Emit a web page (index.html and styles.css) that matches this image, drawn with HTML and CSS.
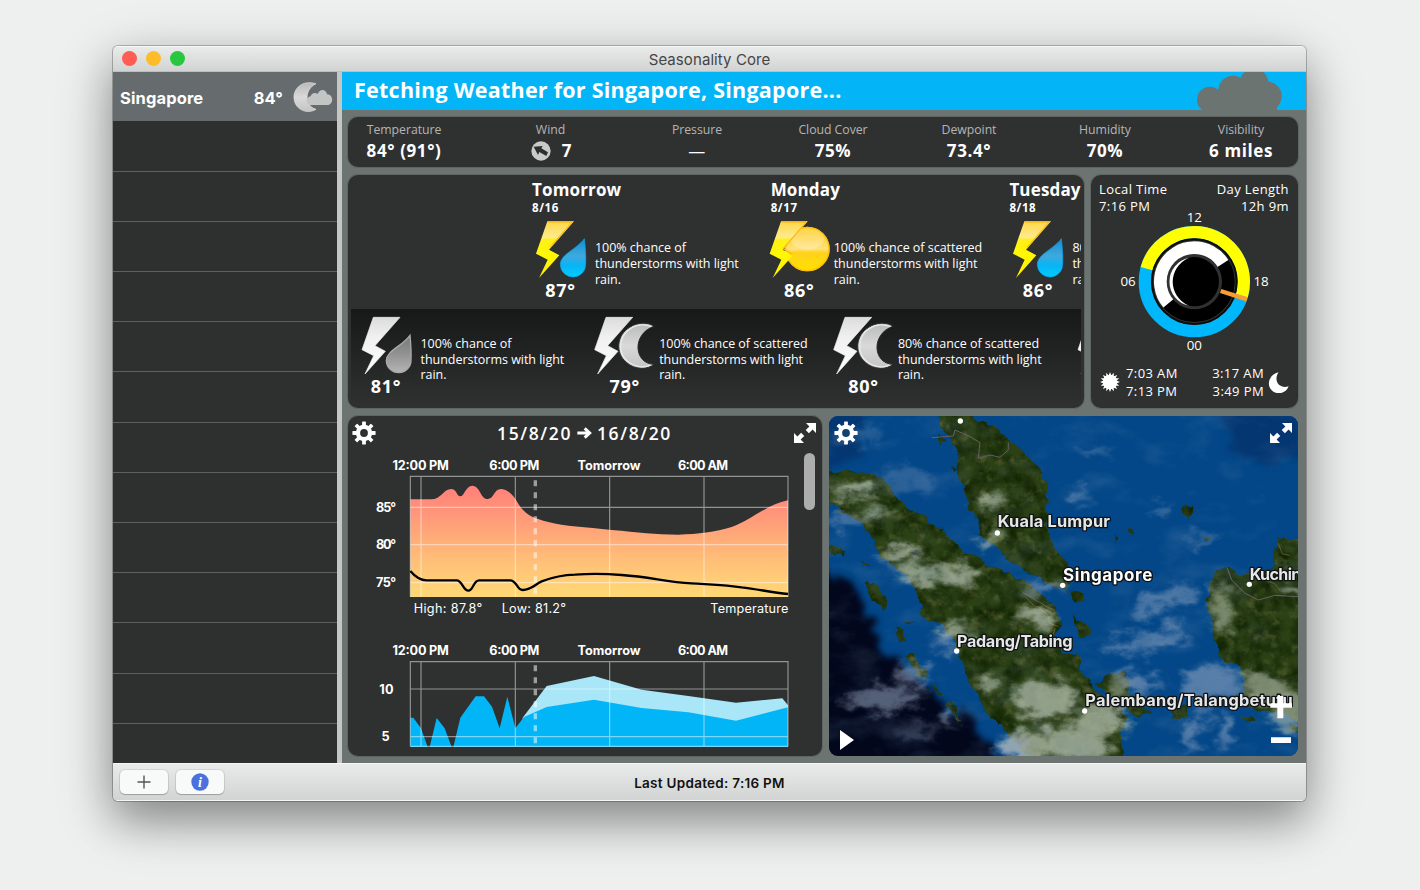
FILE: index.html
```
<!DOCTYPE html>
<html lang="en">
<head>
<meta charset="utf-8">
<title>Seasonality Core</title>
<link rel="stylesheet" href="styles.css">
</head>
<body>
<svg class="defs" width="0" height="0" aria-hidden="true">
  <defs>
    <linearGradient id="gBolt" x1="0" y1="0" x2="0" y2="1"><stop offset="0" stop-color="#ffd84a"/><stop offset=".28" stop-color="#fdea8c"/><stop offset=".32" stop-color="#fff01a"/><stop offset=".6" stop-color="#fff800"/><stop offset="1" stop-color="#fff000"/></linearGradient>
    <linearGradient id="gBoltN" x1="0" y1="0" x2="0" y2="1"><stop offset="0" stop-color="#dcdcdc"/><stop offset=".35" stop-color="#f0f0f0"/><stop offset="1" stop-color="#fff"/></linearGradient>
    <linearGradient id="gDrop" x1="0" y1="0" x2="0" y2="1"><stop offset="0" stop-color="#128ed4"/><stop offset=".45" stop-color="#3fa9dd"/><stop offset=".7" stop-color="#08b4f6"/><stop offset="1" stop-color="#00ccff"/></linearGradient>
    <linearGradient id="gDropN" x1="0" y1="0" x2="0" y2="1"><stop offset="0" stop-color="#777"/><stop offset=".5" stop-color="#929292"/><stop offset="1" stop-color="#b5b5b5"/></linearGradient>
    <linearGradient id="gSun" x1="0" y1="0" x2="0" y2="1"><stop offset="0" stop-color="#ffc400"/><stop offset=".5" stop-color="#ffe27c"/><stop offset=".58" stop-color="#ffd21c"/><stop offset="1" stop-color="#ffe100"/></linearGradient>
    <linearGradient id="gMoon" x1="0" y1="0" x2="0" y2="1"><stop offset="0" stop-color="#b9b9b9"/><stop offset=".5" stop-color="#d9d9d9"/><stop offset="1" stop-color="#c4c4c4"/></linearGradient>
    <linearGradient id="gHeat" x1="0" y1="0" x2="0" y2="1"><stop offset="0" stop-color="#ff7f79"/><stop offset=".3" stop-color="#ff9b7a"/><stop offset=".65" stop-color="#ffbd78"/><stop offset="1" stop-color="#ffd975"/></linearGradient>
    <symbol id="bolt" viewBox="0 0 195 186"><path d="M52 10H132L57 95 88 112 27 180 53 125 18 107Z" fill="url(#gBolt)"/><path d="M54 12H127L60 88" fill="none" stroke="#fbbd1c" stroke-width="4"/></symbol>
    <symbol id="boltN" viewBox="0 0 195 186"><path d="M52 10H132L57 95 88 112 27 180 53 125 18 107Z" fill="url(#gBoltN)" stroke="#f2f2f2" stroke-width="2"/></symbol>
    <symbol id="rainD" viewBox="0 0 195 186"><use href="#bolt"/><path d="M163 62C167 95 168 116 167 138A38 38 0 0 1 91 140C91 108 139 95 163 62Z" fill="url(#gDrop)" stroke="#0ba2ea" stroke-width="2"/></symbol>
    <symbol id="rainN" viewBox="0 0 195 186"><use href="#boltN"/><path d="M162 64C165 95 166 116 165 138A37 37 0 0 1 91 140C91 110 139 97 162 64Z" fill="url(#gDropN)" stroke="#a9a9a9" stroke-width="4"/></symbol>
    <symbol id="sunD" viewBox="0 0 195 186"><circle cx="115" cy="93" r="67" fill="url(#gSun)"/><circle cx="115" cy="93" r="65" fill="none" stroke="#ffbf0a" stroke-width="4"/><ellipse cx="115" cy="63" rx="50" ry="32" fill="#fff" opacity=".25"/><path d="M36 10H116L41 95 72 112 11 180 37 125 2 107Z" fill="url(#gBolt)"/><path d="M38 12H112L43 92 70 110" fill="none" stroke="#fbb91c" stroke-width="4"/></symbol>
    <symbol id="moonN" viewBox="0 0 195 186"><use href="#boltN" x="-16" width="195" height="186"/><path d="M180 37C165 24 129 24 107 40 68 62 62 118 98 146 122 168 163 167 180 151 120 150 112 60 180 37Z" fill="url(#gMoon)" stroke="#2a2c2c" stroke-width="3"/><path d="M172 38C155 30 129 30 110 43 74 66 70 116 101 142 122 160 153 163 169 153" fill="none" stroke="#e9e9e9" stroke-width="4"/></symbol>
    <symbol id="gear" viewBox="0 0 24 24"><g fill="#fff"><g id="teeth"><rect x="10.1" y=".4" width="3.8" height="23.2" rx=".6"/><rect x=".4" y="10.1" width="23.2" height="3.8" rx=".6"/></g><use href="#teeth" transform="rotate(45 12 12)"/></g><circle cx="12" cy="12" r="6" fill="none" stroke="#fff" stroke-width="4.4"/><circle cx="12" cy="12" r="3.9" class="gear-hole"/></symbol>
    <symbol id="expand" viewBox="0 0 24 24"><path d="M13 2H23V12L19.6 8.6 15.9 12.3 12.7 9.1 16.4 5.4ZM11 22H1V12L4.4 15.4 8.1 11.7 11.3 14.9 7.6 18.6Z" fill="#fff"/></symbol>
  </defs>
</svg>

<div class="window">
  <header class="titlebar">
    <div class="lights"><i class="red"></i><i class="amber"></i><i class="green"></i></div>
    <span>Seasonality Core</span>
  </header>

  <div class="body">
    <aside class="sidebar">
      <div class="place">
        <b>Singapore</b><b class="deg">84°</b>
        <svg width="40" height="30" viewBox="0 0 120 90"><path d="M69 5C25-8 0 23 3 49 6 86 46 97 69 82 34 72 33 22 69 5Z" fill="url(#gMoon)" stroke="#e5e5e5" stroke-width="2"/><path d="M52 69C36 67 38 45 53 43 56 33 67 31 74 36 80 18 100 21 102 37 123 38 122 68 103 69Z" fill="#c3c5c5"/></svg>
      </div>
      <ul><li></li><li></li><li></li><li></li><li></li><li></li><li></li><li></li><li></li><li></li><li></li><li></li><li></li></ul>
    </aside>

    <main class="main">
      <div class="banner">
        <h1>Fetching Weather for Singapore, Singapore...</h1>
        <svg class="banner-cloud" width="86" height="38" viewBox="0 3 258 114"><g fill="#6c7472"><circle cx="39" cy="86" r="39"/><circle cx="108" cy="58" r="44"/><circle cx="171" cy="36" r="43"/><circle cx="209" cy="76" r="45"/><path d="M15 117H240V60H39Z"/></g></svg>
      </div>

      <div class="panels">
        <section class="card metrics">
          <div><span>Temperature</span><b>84° (91°)</b></div>
          <div><span>Wind</span><b class="wind"><svg width="20" height="20" viewBox="0 0 60 60"><circle cx="30" cy="30" r="29" fill="#c9c9c9"/><path d="M8 17 35 15 31 22 51 34 46 45 25 33 21 42Z" fill="#2d2f2f"/></svg>7</b></div>
          <div><span>Pressure</span><b class="dash">—</b></div>
          <div><span>Cloud Cover</span><b>75%</b></div>
          <div><span>Dewpoint</span><b>73.4°</b></div>
          <div><span>Humidity</span><b>70%</b></div>
          <div><span>Visibility</span><b>6 miles</b></div>
        </section>

        <div class="row top">
          <section class="card forecast">
            <div class="strip days">
              <article><h2>Tomorrow</h2><h3>8/16</h3><div class="wx"><svg width="65" height="62"><use href="#rainD"/></svg><p>100% chance of<br>thunderstorms with light<br>rain.</p></div><b class="temp">87°</b></article>
              <article><h2>Monday</h2><h3>8/17</h3><div class="wx"><svg width="65" height="62"><use href="#sunD"/></svg><p>100% chance of scattered<br>thunderstorms with light<br>rain.</p></div><b class="temp">86°</b></article>
              <article><h2>Tuesday</h2><h3>8/18</h3><div class="wx"><svg width="65" height="62"><use href="#rainD"/></svg><p>80% chance of<br>thunderstorms with light<br>rain.</p></div><b class="temp">86°</b></article>
            </div>
            <div class="strip nights">
              <article><div class="wx"><svg width="65" height="62"><use href="#rainN"/></svg><p>100% chance of<br>thunderstorms with light<br>rain.</p></div><b class="temp">81°</b></article>
              <article><div class="wx"><svg width="65" height="62"><use href="#moonN"/></svg><p>100% chance of scattered<br>thunderstorms with light<br>rain.</p></div><b class="temp">79°</b></article>
              <article><div class="wx"><svg width="65" height="62"><use href="#moonN"/></svg><p>80% chance of scattered<br>thunderstorms with light<br>rain.</p></div><b class="temp">80°</b></article>
              <article><div class="wx"><svg width="65" height="62"><use href="#rainN"/></svg></div></article>
            </div>
          </section>

          <section class="card clock">
            <div class="pair head"><div>Local Time<br>7:16 PM</div><div class="r">Day Length<br>12h 9m</div></div>
            <svg class="dial" width="207" height="150" viewBox="18 120 621 450">
              <g fill="none">
                <circle cx="328" cy="335" r="148.5" stroke="#00b7fb" stroke-width="37"/>
                <path d="M184.700 296.080A148.500 148.500 0 0 1 328 186.500A148.500 148.500 0 0 1 470.440 377" stroke="#ffff02" stroke-width="37"/>
                <circle cx="328" cy="335" r="127" stroke="#0c0d0d" stroke-width="6"/>
                <circle cx="328" cy="335" r="101" stroke="#000" stroke-width="40"/>
                <path d="M250.600 400A101 101 0 0 1 328 234A101 101 0 0 1 413.200 280.700" stroke="#fff" stroke-width="40"/>
              </g>
              <circle cx="328" cy="335" r="83" fill="#303232"/><circle cx="328" cy="335" r="74" fill="#000"/>
              <path d="M312 263A73.500 73.500 0 0 0 312 407C247 378 247 292 312 263Z" fill="#fff"/>
              <path d="M407 363 486 388" stroke="#fc9a34" stroke-width="13"/>
              <g class="dial-text"><text x="328" y="157">12</text><text x="129" y="349">06</text><text x="528" y="349">18</text><text x="328" y="541">00</text></g>
            </svg>
            <div class="pair foot">
              <svg width="20" height="20" viewBox="0 0 60 60"><g fill="#fff"><circle cx="30" cy="30" r="21.500"/><g id="r3"><g id="r2"><g id="r1"><path d="M30 0 35 13H25ZM30 60 35 47H25Z"/></g><use href="#r1" transform="rotate(22.500 30 30)"/></g><use href="#r2" transform="rotate(45 30 30)"/></g><use href="#r3" transform="rotate(90 30 30)"/></g></svg>
              <div class="rise">7:03 AM<br>7:13 PM</div><div class="r set">3:17 AM<br>3:49 PM</div>
              <svg width="21" height="21" viewBox="0 0 62 62"><path d="M31 1C-1 9-6 44 16 58 34 69 54 60 61 42 36 51 14 28 31 1Z" fill="#fff"/></svg>
            </div>
          </section>
        </div>

        <div class="row bottom">
          <section class="card graphs">
            <div class="graph-head"><svg width="24" height="24"><use href="#gear"/></svg><h2>15/8/20 <svg width="15" height="14" viewBox="0 0 45 42"><path d="M1 21H34M23 7 38 21 23 35" fill="none" stroke="#fff" stroke-width="9"/></svg> 16/8/20</h2><svg width="24" height="24"><use href="#expand"/></svg></div>
            <div class="graph-body">
              <div class="plots">
                <svg width="444" height="162" viewBox="15 140 1332 486">
                  <g class="tick-x"><text x="227" y="178" textLength="169">12:00 PM</text><text x="508" y="178" textLength="150">6:00 PM</text><text x="792" y="178" textLength="189">Tomorrow</text><text x="1074" y="178" textLength="150">6:00 AM</text></g>
                  <g class="tick-y"><text x="153" y="304" textLength="60">85°</text><text x="153" y="417" textLength="60">80°</text><text x="153" y="530" textLength="60">75°</text></g>
                  <path d="M196 267H258C290 267 295 235 320 236 336 237 334 258 346 258 358 258 362 226 382 226 406 227 406 266 428 266 448 266 446 234 470 236 490 238 505 255 520 280 540 313 560 322 610 335 660 348 720 350 800 359 880 366 930 373 1000 373 1060 371 1110 366 1160 350 1220 329 1260 285 1329 270V560H196Z" fill="url(#gHeat)"/>
                  <path class="grid" d="M196 560V198H1329V560M228 198V560M511 198V560M794 198V560M1077 198V560M196 291H1329M196 403H1329M196 517H1329"/>
                  <path class="now" d="M571 210V552"/>
                  <path d="M196 482C206 494 220 510 245 510H335C352 510 354 541 370 541 385 541 385 510 402 510H495C516 510 516 540 533 539 560 538 570 522 590 513 625 500 650 494 690 493 730 490 780 490 830 494 920 500 960 515 1040 519 1120 524 1150 525 1190 531 1240 537 1280 546 1329 551" fill="none" stroke="#000" stroke-width="7"/>
                  <g class="legend"><text x="206" y="609" textLength="206">High: 87.8°</text><text x="470" y="609" textLength="193">Low: 81.2°</text><text x="1330" y="609" textLength="234" text-anchor="end">Temperature</text></g>
                </svg>
                <svg width="444" height="106" viewBox="15 122 1332 318">
                  <g class="tick-x"><text x="227" y="164" textLength="169">12:00 PM</text><text x="508" y="164" textLength="150">6:00 PM</text><text x="792" y="164" textLength="189">Tomorrow</text><text x="1074" y="164" textLength="150">6:00 AM</text></g>
                  <g class="tick-y"><text x="146" y="281" textLength="43">10</text><text x="134" y="423">5</text></g>
                  <path d="M533 352 605 257 747 227 890 268 1030 287 1173 307 1312 294 1329 315V440H533Z" fill="#a8e6f8"/>
                  <path d="M196 352H205L228 384 248 440H254L275 353 299 384 320 440H325L346 352 392 288H417L441 319 464 384 487 289 511 384 537 350 605 320 747 298 890 323 1030 336 1173 361 1329 321V440H196Z" fill="#02b5f7"/>
                  <path class="grid" d="M196 438V184H1329V438M228 184V438M511 184V438M794 184V438M1077 184V438M196 266H1329M196 409H1329M196 438H1329"/>
                  <path class="now" d="M571 195V432"/>
                </svg>
              </div>
              <div class="scroll"><i></i></div>
            </div>
          </section>

          <section class="map">
            <svg class="map-art" width="469" height="340" viewBox="12 18 1407 1020">
              <defs>
                <filter id="coast" x="-5%" y="-5%" width="110%" height="110%" color-interpolation-filters="sRGB"><feTurbulence type="fractalNoise" baseFrequency=".03" numOctaves="4" seed="4" result="n"/><feDisplacementMap in="SourceGraphic" in2="n" scale="26" xChannelSelector="R" yChannelSelector="G" result="d"/><feTurbulence type="fractalNoise" baseFrequency=".022" numOctaves="5" seed="9"/><feColorMatrix values="0 0 0 0 .06  0 0 0 0 .13  0 0 0 0 .01  2 0 0 0 -.7" result="t"/><feComposite in="t" in2="d" operator="in" result="tx"/><feTurbulence type="fractalNoise" baseFrequency=".03" numOctaves="5" seed="31"/><feColorMatrix values="0 0 0 0 .4  0 0 0 0 .42  0 0 0 0 .22  0 1.8 0 0 -.98" result="l"/><feComposite in="l" in2="d" operator="in" result="lx"/><feMerge><feMergeNode in="d"/><feMergeNode in="tx"/><feMergeNode in="lx"/></feMerge></filter>
                <filter id="deep" x="-20%" y="-20%" width="140%" height="140%" color-interpolation-filters="sRGB"><feTurbulence type="fractalNoise" baseFrequency=".02" numOctaves="4" seed="2" result="n"/><feDisplacementMap in="SourceGraphic" in2="n" scale="90" xChannelSelector="R" yChannelSelector="G"/><feGaussianBlur stdDeviation="9"/></filter>
                <filter id="cloud" x="-20%" y="-20%" width="140%" height="140%" color-interpolation-filters="sRGB"><feTurbulence type="fractalNoise" baseFrequency=".014 .022" numOctaves="4" seed="7" result="n"/><feGaussianBlur in="SourceGraphic" stdDeviation="13" result="b"/><feDisplacementMap in="b" in2="n" scale="95" xChannelSelector="R" yChannelSelector="G"/></filter>
                <filter id="haze" x="0" y="0" width="100%" height="100%" color-interpolation-filters="sRGB"><feTurbulence type="fractalNoise" baseFrequency=".006 .011" numOctaves="5" seed="21"/><feColorMatrix values="0 0 0 0 .5  0 0 0 0 .62  0 0 0 0 .75  0 2.2 0 0 -1.1"/></filter>
              </defs>
              <rect x="12" y="18" width="1407" height="1020" fill="#034788"/>
              <path filter="url(#deep)" d="M-60 460 50 500 120 570 150 680 250 780 330 860 430 930 500 1000 540 1100H-60Z" fill="#02071c"/>
              <g filter="url(#deep)" fill="#05336c" opacity=".8"><path d="M1190 0H1440V130L1330 170 1230 130Z"/><path d="M0 0H130L100 130 30 190H0Z"/></g>
              <g filter="url(#coast)" fill="#2b4015">
                <path d="M330 0 345 50 380 85 400 120 395 170 402 215 425 260 430 300 462 340 465 380 500 400 540 440 590 475 640 500 690 530 718 542 735 515 725 460 690 415 668 370 662 300 670 240 650 180 610 140 570 105 540 80 500 45 460 35 425 0Z"/>
                <path d="M0 180 60 185 150 190 185 215 215 265 270 310 340 350 385 390 415 435 445 432 480 465 530 485 590 510 640 550 690 585 705 640 685 690 710 725 760 738 770 790 815 845 870 880 905 920 890 960 895 1050H630L570 1000 540 960 490 910 450 850 430 800 400 730 385 690 340 640 295 620 280 560 260 510 220 480 165 440 150 395 110 340 60 310 0 275Z"/>
                <path d="M1430 388 1357 390 1347 440 1345 480 1285 490 1240 495 1210 470 1180 480 1155 520 1145 560 1160 620 1165 680 1185 750 1215 765 1245 760 1252 800 1258 880 1305 910 1360 900 1430 940Z"/>
                <path d="M815 825 855 785 900 790 915 840 975 910 925 915 895 880ZM1035 882 1092 888 1085 922 1042 930Z"/>
                <path d="M115 520 145 515 185 560 178 600 145 570ZM215 650 235 660 242 690 222 698ZM245 735 270 730 305 805 270 795ZM325 825 350 855 330 850ZM362 870 385 880 412 940 395 930ZM0 400 55 428 55 442 0 420ZM110 450 135 465 125 470ZM238 632 268 636 240 640ZM1068 295 1090 280 1106 305 1088 330ZM908 350 925 355 920 378ZM866 378 880 385 870 398ZM1138 378 1152 390 1142 398ZM735 545 780 550 778 575 745 570ZM745 610 800 670 765 680ZM340 75 360 95 345 105ZM1250 910 1290 930 1270 940ZM382 165 398 180 388 186ZM1395 945 1430 950 1410 965Z"/>
              </g>
              <path d="M240 395 258 405 285 440 270 438 255 425 275 428 264 415Z" fill="#080b18"/>
              <g fill="none" stroke="#675c65" stroke-width="3"><path d="M320 83 385 78 390 60 435 80 465 98 460 145 495 135 525 142 550 120 550 98M1206 472 1220 510 1260 550 1300 570 1350 556 1419 560"/></g>
              <g fill="none" stroke="#87723a" stroke-width="3" opacity=".6"><path d="M590 545 630 570 650 580 668 592 690 600M640 590 668 615 676 640 700 650M600 560 630 590 650 592 680 610M690 655 680 690M1360 400 1372 432 1395 436M1325 512 1350 522 1365 540"/></g>
              <g filter="url(#cloud)" fill="#b5c1b0" opacity=".75">
                <ellipse cx="90" cy="240" rx="70" ry="28"/><ellipse cx="150" cy="310" rx="45" ry="18"/><ellipse cx="225" cy="425" rx="65" ry="24"/><ellipse cx="280" cy="488" rx="60" ry="25"/><ellipse cx="400" cy="490" rx="65" ry="30"/><ellipse cx="490" cy="275" rx="38" ry="24"/><ellipse cx="500" cy="385" rx="35" ry="16"/><ellipse cx="625" cy="625" rx="52" ry="30"/><ellipse cx="390" cy="665" rx="50" ry="25"/><ellipse cx="660" cy="870" rx="100" ry="58"/><ellipse cx="620" cy="1010" rx="75" ry="55"/><ellipse cx="760" cy="1000" rx="90" ry="55"/><ellipse cx="835" cy="930" rx="85" ry="45"/><ellipse cx="1190" cy="600" rx="35" ry="70" opacity=".75"/><ellipse cx="1320" cy="840" rx="75" ry="50" opacity=".8"/><ellipse cx="1390" cy="900" rx="70" ry="55" opacity=".8"/><ellipse cx="1405" cy="550" rx="40" ry="15"/><ellipse cx="880" cy="840" rx="40" ry="28" opacity=".6"/><ellipse cx="490" cy="820" rx="40" ry="20"/>
              </g>
              <g filter="url(#cloud)" fill="#9babc4" opacity=".55">
                <ellipse cx="175" cy="865" rx="115" ry="34"/><ellipse cx="260" cy="795" rx="55" ry="28"/><ellipse cx="280" cy="960" rx="65" ry="15" opacity=".6"/><ellipse cx="370" cy="920" rx="30" ry="20"/><ellipse cx="660" cy="530" rx="60" ry="20"/><ellipse cx="360" cy="700" rx="38" ry="24"/><ellipse cx="560" cy="1010" rx="30" ry="50"/><ellipse cx="1020" cy="570" rx="110" ry="22" transform="rotate(-25 1020 570)"/><ellipse cx="910" cy="705" rx="90" ry="18"/><ellipse cx="1020" cy="680" rx="75" ry="24" transform="rotate(-20 1020 680)"/><ellipse cx="1160" cy="810" rx="85" ry="50"/><ellipse cx="940" cy="820" rx="60" ry="40"/><ellipse cx="1110" cy="960" rx="25" ry="70" transform="rotate(20 1110 960)"/><ellipse cx="1195" cy="965" rx="20" ry="60"/><ellipse cx="760" cy="250" rx="38" ry="15"/><ellipse cx="1000" cy="295" rx="25" ry="12"/><ellipse cx="1125" cy="385" rx="30" ry="10"/><ellipse cx="810" cy="125" rx="50" ry="9"/><ellipse cx="100" cy="70" rx="70" ry="22" opacity=".45"/><ellipse cx="240" cy="210" rx="90" ry="38" opacity=".5"/><ellipse cx="70" cy="325" rx="45" ry="15"/>
              </g>
              <rect x="12" y="18" width="1407" height="1020" filter="url(#haze)" opacity=".22"/>
              <g fill="#fff"><circle cx="406" cy="33" r="8"/><circle cx="517" cy="369" r="8"/><circle cx="713" cy="526" r="8"/><circle cx="395" cy="723" r="8"/><circle cx="1273" cy="523" r="8"/><circle cx="779" cy="903" r="8"/></g>
              <g class="cities"><text x="518" y="351" textLength="337">Kuala Lumpur</text><text x="714" y="513" textLength="268" class="major">Singapore</text><text x="396" y="711" textLength="347">Padang/Tabing</text><text x="1274" y="510" textLength="184">Kuching</text><text x="781" y="887" textLength="622">Palembang/Talangbetutu</text></g>
            </svg>
            <div class="map-tools">
              <div class="tool-row"><svg width="24" height="24" class="on-sea"><use href="#gear"/></svg><svg width="24" height="24"><use href="#expand"/></svg></div>
              <div class="tool-row end"><svg width="14" height="20" viewBox="0 0 14 20"><path d="M0 0 14 10 0 20Z" fill="#fff"/></svg><svg width="24" height="52" viewBox="0 0 72 156"><path d="M25 6H43V28H69V41H43V73H25V41H4V28H25ZM6 130H66V147H6Z" fill="#fff"/></svg></div>
            </div>
          </section>
        </div>
      </div>
    </main>
  </div>

  <footer class="footer">
    <div class="buttons">
      <button><svg width="14" height="14" viewBox="0 0 14 14"><path d="M7 .5V13.500M.5 7H13.500" stroke="#555" stroke-width="1.400"/></svg></button>
      <button><svg width="18" height="18" viewBox="0 0 18 18"><circle cx="9" cy="9" r="8.700" fill="#4d70df"/><text x="9" y="14" class="info">i</text></svg></button>
    </div>
    <b>Last Updated: 7:16 PM</b>
  </footer>
</div>
</body>
</html>
```
FILE: styles.css
```
* { box-sizing: border-box; }
body { margin: 0; height: 890px; overflow: hidden; background: #eef0ef; color: #fff; font-family: "Open Sans", "Noto Sans", sans-serif; padding: 46px 0 0 113px; }
h1, h2, h3, p, ul { margin: 0; padding: 0; list-style: none; }
svg { display: block; flex: none; }
.defs { position: absolute; }

.window { width: 1193px; height: 755px; display: flex; flex-direction: column; border-radius: 5px; overflow: hidden; background: #d9dbda; box-shadow: 0 0 0 1px rgba(0,0,0,.24), 0 20px 40px rgba(0,0,0,.28), 0 16px 60px rgba(0,0,0,.24); }
.titlebar { height: 26px; display: grid; grid-template-columns: 1fr auto 1fr; align-items: center; background: linear-gradient(#e9ebea, #d2d4d3); border-top: 1px solid #f7f8f8; border-bottom: 1px solid #bfbfbf; font: 15px Inter, sans-serif; color: #454545; }
.titlebar span { letter-spacing: .08px; }
.lights { display: flex; gap: 9px; padding-left: 9px; }
.lights i { width: 15px; height: 15px; border-radius: 50%; margin-top: -1px; }
.red { background: #ff5c54; }
.amber { background: #fdbd2b; }
.green { background: #27c840; }

.body { flex: 1; display: flex; min-height: 0; }
.sidebar { width: 229px; background: #2e3030; border-right: 5px solid #c5c7c6; overflow: hidden; }
.place { height: 49px; background: #666b6d; display: flex; align-items: center; padding: 2px 4px 0 7px; font: 16.500px Inter, sans-serif; }
.place b { font-weight: 700; letter-spacing: .12px; }
.place .deg { margin-left: auto; margin-right: 10px; }
.place svg { margin-top: -2px; }
.sidebar ul { padding-top: .5px; }
.sidebar li { height: 50.200px; border-bottom: 1px solid #5c6061; }
.sidebar li:last-child { border: 0; }

.main { flex: 1; background: #6c7472; display: flex; flex-direction: column; }
.banner { height: 38px; background: #03b5f6; display: flex; justify-content: space-between; padding: 0 23px 0 12px; }
.banner h1 { font-size: 21.500px; line-height: 36px; font-weight: 700; white-space: nowrap; letter-spacing: .25px; }
.panels { padding: 7px 8px 7px 6px; display: flex; flex-direction: column; gap: 8px; flex: 1; }
.card { background: #2f3131; border-radius: 10px; box-shadow: 0 0 0 1px rgba(50,55,55,.25); }

.metrics { height: 50px; display: grid; grid-template-columns: 112px 181px 112px 160px 112px 160px 112px; text-align: center; padding-top: 3px; }
.metrics span { display: block; font-size: 12.300px; line-height: 19px; letter-spacing: -.05px; color: #b3b5b5; }
.metrics b { display: flex; justify-content: center; align-items: center; font-size: 17px; line-height: 23px; gap: 11px; letter-spacing: .6px; }
.metrics .wind { padding-left: 2px; }
.metrics .dash { font-weight: 400; }

.row { display: flex; gap: 7px; }
.top { height: 233px; }
.bottom { height: 340px; }
.forecast { width: 736px; padding: 3px; overflow: hidden; }
.strip { display: flex; overflow: hidden; width: 730px; }
.strip article { width: 238.700px; flex: none; }
.days { height: 131px; padding-left: 179px; }
.days h2 { font-size: 17px; line-height: 23px; letter-spacing: .15px; padding-left: 2px; }
.days h3 { font-size: 11.500px; line-height: 13px; letter-spacing: .6px; padding-left: 2px; }
.nights { height: 96px; padding: 3px 0 0 4.500px; background: linear-gradient(#171919, #2f3131); }
.wx { display: flex; align-items: center; height: 66px; }
.wx p { font-size: 12.500px; line-height: 15.700px; white-space: nowrap; padding-top: 29px; letter-spacing: -.03px; }
.days .wx { height: 68px; }
.days .wx svg { margin-top: 2px; }
.days .wx p { padding-top: 32px; }
.temp { display: block; width: 61px; text-align: center; font-size: 18px; line-height: 18px; margin-top: -1px; letter-spacing: .7px; }
.days .temp { margin-top: -1px; }

.clock { width: 207px; display: flex; flex-direction: column; padding-top: 6px; }
.pair { display: flex; justify-content: space-between; font-size: 13px; line-height: 17px; letter-spacing: .4px; }
.pair .r { text-align: right; }
.head { padding: 0 9px 0 8px; }
.dial { margin-top: -5px; margin-bottom: 4px; }
.dial-text { fill: #fff; font-size: 40px; text-anchor: middle; }
.foot { padding: 0 9px; line-height: 18px; align-items: center; }
.rise { margin-right: auto; padding-left: 6px; }
.set { padding-right: 4px; }

.graphs { width: 474px; overflow: hidden; }
.graph-head { display: flex; justify-content: space-between; align-items: center; height: 37px; padding: 0 5px 3px 4px; }
.graph-head h2 { display: flex; align-items: center; gap: 5px; font-size: 17.500px; font-weight: 600; letter-spacing: 1.600px; }
.gear-hole { fill: var(--hole, #2f3131); }
.on-sea { --hole: #12406f; }
.graph-body { display: flex; gap: 10px; padding-left: 2px; }
.plots { display: flex; flex-direction: column; gap: 22px; padding-top: 4px; width: 444px; }
.tick-x, .tick-y, .legend { fill: #fff; font: 600 38px Inter, sans-serif; }
.tick-x { text-anchor: middle; font-weight: 700; }
.tick-y { text-anchor: end; font-weight: 700; }
.legend { font-weight: 400; }
.grid { fill: none; stroke: #fff; stroke-opacity: .48; stroke-width: 3.500; }
.now { stroke: #fff; stroke-opacity: .52; stroke-width: 10; stroke-dasharray: 18 18; }
.scroll i { display: block; width: 11px; height: 57px; border-radius: 6px; background: #adadad; }

.map { width: 469px; display: grid; border-radius: 9px; overflow: hidden; background: #034788; }
.map-art, .map-tools { grid-area: 1 / 1; }
.map-tools { z-index: 1; display: flex; flex-direction: column; justify-content: space-between; padding: 5px 5px 6px 5px; }
.tool-row { display: flex; justify-content: space-between; }
.end { align-items: center; padding-left: 6px; }
.end > svg:first-child { margin-top: 40px; }
.cities { font: 700 49px Inter, sans-serif; fill: #e6e8e8; stroke: #101214; stroke-width: 8; paint-order: stroke; stroke-linejoin: round; }
.cities .major { fill: #fff; font-size: 51px; }

.footer { height: 38px; display: grid; grid-template-columns: 1fr auto 1fr; align-items: center; background: linear-gradient(#e9ebea, #d2d4d3); border-top: 1px solid #f5f6f6; border-bottom: 1px solid #f5f5f5; color: #111; font: 13.500px Inter, sans-serif; }
.footer b { font-weight: 600; letter-spacing: .28px; padding-top: 1px; }
.buttons { display: flex; gap: 8px; padding-left: 7px; }
.buttons button { width: 48px; height: 24px; padding: 0; border: 0; border-radius: 5px; background: #f8f9f9; box-shadow: 0 0 0 1px rgba(0,0,0,.08), 0 1px 1px rgba(0,0,0,.2); display: flex; align-items: center; justify-content: center; }
.info { fill: #fff; font: italic bold 14px "Liberation Serif", serif; text-anchor: middle; }
```
